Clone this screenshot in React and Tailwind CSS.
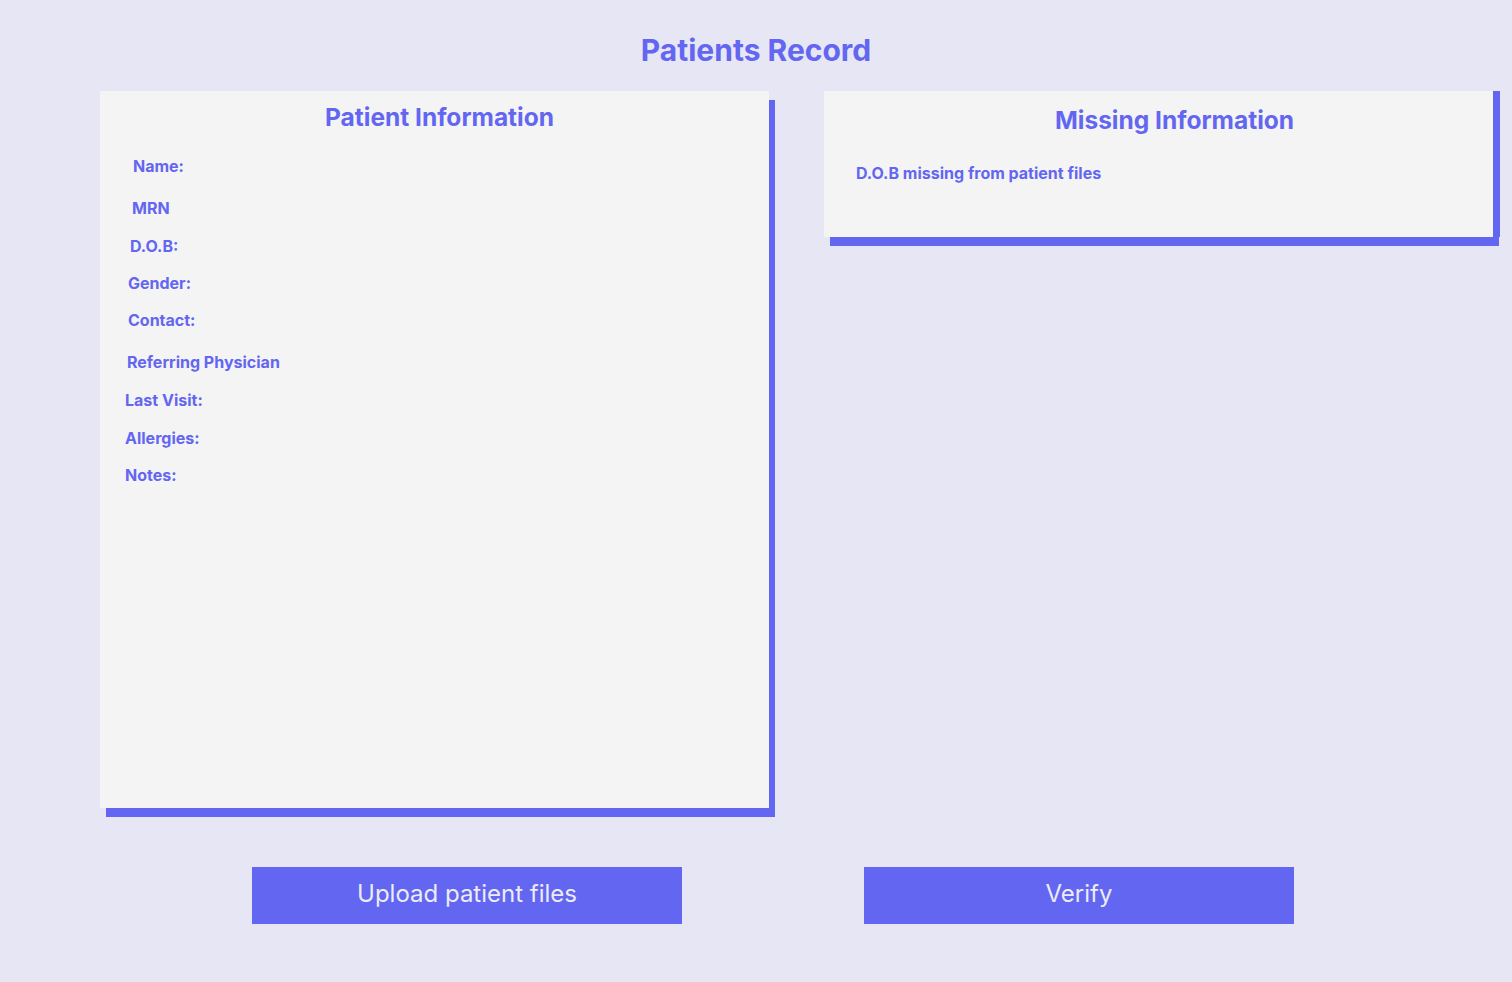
export default function App() {
  const labels = [
    ["Name:", "mt-[23px] ml-[33px]"],
    ["MRN", "mt-[22px] ml-[32px]"],
    ["D.O.B:", "mt-[18px] ml-[30px]"],
    ["Gender:", "mt-[17px] ml-[28px]"],
    ["Contact:", "mt-[17px] ml-[28px]"],
    ["Referring Physician", "mt-[22px] ml-[27px]"],
    ["Last Visit:", "mt-[18px] ml-[25px]"],
    ["Allergies:", "mt-[18px] ml-[25px]"],
    ["Notes:", "mt-[17px] ml-[25px]"],
  ];
  return (
    <div
      className="w-[1512px] h-[982px] bg-[#e7e6f4] text-[#6366f1] overflow-hidden"
      style={{ fontFamily: "Inter, 'Noto Sans', sans-serif" }}
    >
      <h1 className="pt-[34px] h-[91px] text-center text-[30px] leading-[32px] font-bold">
        Patients Record
      </h1>
      <div className="flex items-start pl-[100px] gap-[55px]">
        <div className="w-[669px] h-[717px] bg-[#f4f4f5] shadow-[6px_9px_0_#6366f1] pt-[10px]">
          <h2 className="pl-[10px] text-center text-[24.5px] leading-[32px] font-bold">
            Patient Information
          </h2>
          <div className="flex flex-col items-start">
            {labels.map(([t, c]) => (
              <div key={t} className={`${c} text-[16px] leading-[20px] font-bold`}>
                {t}
              </div>
            ))}
          </div>
        </div>
        <div className="w-[669px] h-[146px] bg-[#f4f4f5] shadow-[7px_0_0_#6366f1,6px_9px_0_#6366f1] pt-[13px]">
          <h2 className="pl-[32px] text-center text-[24.5px] leading-[32px] font-bold">
            Missing Information
          </h2>
          <div className="mt-[27px] pl-[32px] text-[16px] leading-[20px] font-bold">
            D.O.B missing from patient files
          </div>
        </div>
      </div>
      <div className="flex pl-[252px] gap-[182px] mt-[59px]">
        <button className="w-[430px] h-[57px] pb-[3px] bg-[#6366f1] text-[#ecebf8] text-[24px] font-normal">
          Upload patient files
        </button>
        <button className="w-[430px] h-[57px] pb-[3px] bg-[#6366f1] text-[#ecebf8] text-[24px] font-normal">
          Verify
        </button>
      </div>
    </div>
  );
}
